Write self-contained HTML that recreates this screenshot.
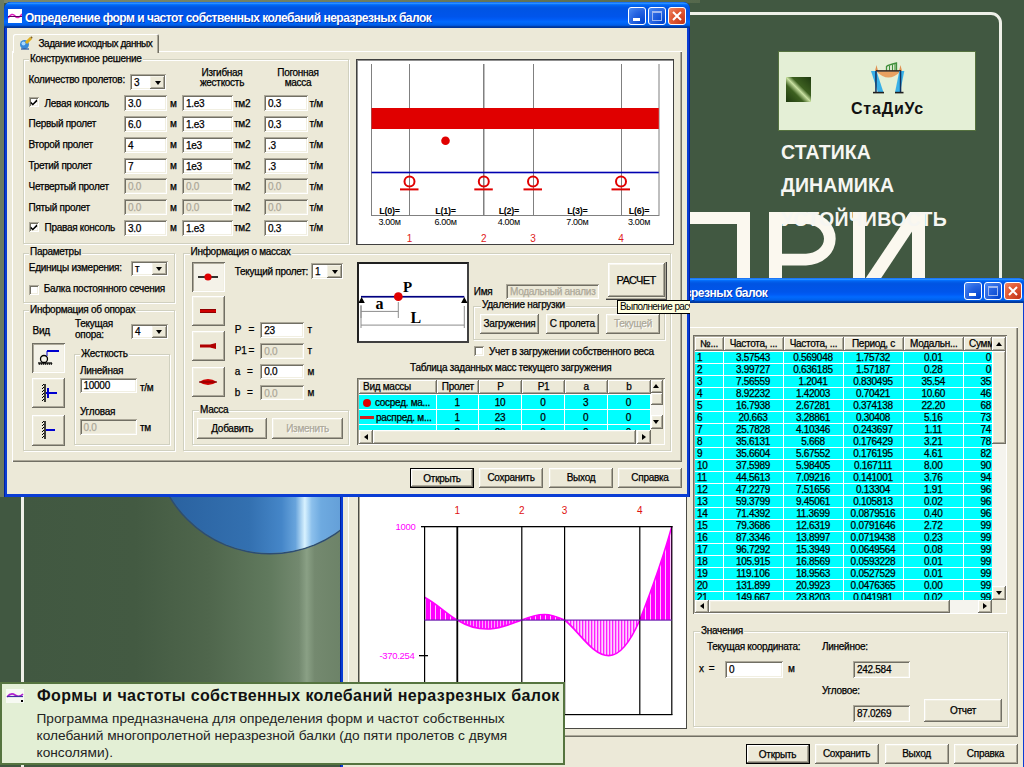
<!DOCTYPE html><html><head><meta charset="utf-8"><title>Recreation</title><style>
*{margin:0;padding:0;box-sizing:border-box}
html,body{width:1024px;height:767px;overflow:hidden}
body{position:relative;background:#415841;font-family:"Liberation Sans",sans-serif}
.a{position:absolute}
.t{position:absolute;font-size:10px;letter-spacing:-0.28px;line-height:12px;white-space:nowrap;color:#000}
.gl{background:#ece9d8;padding:0 1px}
.ed{position:absolute;background:#fff;box-shadow:inset 1px 1px #aca899,inset -1px -1px #fff,inset 2px 2px #716f64,inset -2px -2px #f1efe2;font-size:10px;letter-spacing:-0.28px;padding-left:4px;white-space:nowrap;overflow:hidden;color:#000}
.ed.dis{background:#ece9d8;color:#aca899}
.ed.ro{background:#ece9d8}
.btn{position:absolute;background:#ece9d8;box-shadow:inset -1px -1px #716f64,inset 1px 1px #fff,inset -2px -2px #aca899,inset 2px 2px #f1efe2;font-size:10px;letter-spacing:-0.28px;text-align:center;white-space:nowrap;overflow:hidden;color:#000}
.btn.def{border:1px solid #000;box-shadow:inset -1px -1px #716f64,inset 1px 1px #fff,inset -2px -2px #aca899,inset 2px 2px #f1efe2}
.btn.dis{color:#aca899;text-shadow:1px 1px #fff}
.btn.prs{background:#f4f2e8;box-shadow:inset 1px 1px #716f64,inset -1px -1px #fff,inset 2px 2px #aca899,inset -2px -2px #f1efe2}
.grp{position:absolute;border:1px solid #d0d0bf;box-shadow:inset 1px 1px #fff,1px 1px #fff}
.chk{position:absolute;background:#fff;box-shadow:inset 1px 1px #aca899,inset -1px -1px #fff,inset 2px 2px #716f64,inset -2px -2px #f1efe2}
.arr{position:absolute;left:50%;top:50%;width:0;height:0;border-left:3.5px solid transparent;border-right:3.5px solid transparent}
.arr.dn{border-top:4px solid #000;margin:-2px 0 0 -3.5px}
.arr.up{border-bottom:4px solid #000;margin:-2px 0 0 -3.5px}
.arr.lf{border:0;border-top:3.5px solid transparent;border-bottom:3.5px solid transparent;border-right:4px solid #000;margin:-3.5px 0 0 -2px}
.arr.rt{border:0;border-top:3.5px solid transparent;border-bottom:3.5px solid transparent;border-left:4px solid #000;margin:-3.5px 0 0 -2px}
.tb{background:linear-gradient(to bottom,#0058ee 0%,#3593ff 4%,#288eff 6%,#127dff 8%,#036ffc 10%,#0262ee 14%,#0057e5 20%,#0054e3 24%,#0055eb 56%,#005bf5 66%,#026afe 76%,#0062ef 86%,#0052d6 92%,#0040ab 94%,#003092 100%)}
.ttl{position:absolute;color:#fff;font-weight:bold;font-size:12px;letter-spacing:-0.5px;white-space:nowrap;line-height:14px;text-shadow:1px 1px rgba(10,24,131,0.6)}
.wb{position:absolute;width:18px;height:18px;border:1px solid #fff;border-radius:3px;background:radial-gradient(circle at 90% 90%,#0044d0 0%,#2663e0 55%,#4d8cf5 100%)}
.wb.cl{background:radial-gradient(circle at 90% 90%,#c4361a 0%,#e05a34 60%,#f08a6a 100%)}
.grid{position:absolute;overflow:hidden}
.hd{position:absolute;background:#ece9d8;box-shadow:inset -1px -1px #716f64,inset 1px 1px #fff,inset -2px -2px #aca899;font-size:10px;letter-spacing:-0.28px;text-align:center;white-space:nowrap;overflow:hidden;color:#000}
.t,.ed,.btn,.hd,.cy{-webkit-text-stroke:0.25px currentColor}
.cy{position:absolute;background:#00ffff;font-size:10px;letter-spacing:-0.28px;text-align:center;white-space:nowrap;overflow:hidden;color:#000}
</style></head><body>
<div class="a" style="left:24px;top:490px;width:316px;height:200px;background:linear-gradient(to right,#415841 0%,#435a42 35%,#4f664c 58%,#617a5e 78%,#73896f 87%,#8aa085 89.5%,#74896f 92%,#6d8368 100%)"></div>
<div class="a" style="left:0;top:490px;width:340px;height:200px;overflow:hidden"><div class="a" style="left:154px;top:-169px;width:232px;height:232px;border-radius:50%;background:linear-gradient(to right,#24578f 0%,#2a62a0 7%,#3370b0 41%,#4586c8 55%,#68a4dc 61%,#d8f2ff 65%,#8cc0ec 68%,#6eaae0 72%,#5f9ad4 85%,#5a94cc 100%);box-shadow:0 0 0 1.5px #2c4c74"></div></div>
<div class="a" style="left:0px;top:0px;width:700px;height:3px;background:linear-gradient(to right,#7b876c,#6f7d60 50%,#55684c)"></div>
<div class="a" style="left:0px;top:0px;width:4px;height:497px;background:#6b7b62"></div>
<div class="a" style="left:21px;top:12px;width:981px;height:888px;border:3px solid #eef0e8;border-radius:11px"></div>
<svg class="a" style="left:0;top:0" width="1024" height="767"><g fill="#fbf8ef">
<rect x="600" y="212" width="150" height="12"/><rect x="737" y="212" width="13" height="90"/>
<rect x="769" y="212" width="13" height="90"/>
<path fill-rule="evenodd" d="M769 212 H806 A29.7 26.7 0 0 1 806 265.4 H769 Z M782 224 H806 A18 14.85 0 0 1 806 253.7 H782 Z"/>
<rect x="853" y="212" width="12" height="90"/><rect x="912" y="212" width="13" height="90"/>
<path d="M851 300 L866.6 300 L925 212 L910 212 Z"/>
</g></svg>
<div class="a" style="left:781px;top:142.5px;font:bold 19.5px/1 'Liberation Sans',sans-serif;letter-spacing:0.1px;color:#f6f6f2;white-space:nowrap">СТАТИКА</div>
<div class="a" style="left:781px;top:175.5px;font:bold 19.5px/1 'Liberation Sans',sans-serif;letter-spacing:0.1px;color:#f6f6f2;white-space:nowrap">ДИНАМИКА</div>
<div class="a" style="left:781px;top:210px;font:bold 19.5px/1 'Liberation Sans',sans-serif;letter-spacing:0.3px;color:#f6f6f2;white-space:nowrap">УСТОЙЧИВОСТЬ</div>
<div class="a" style="left:778px;top:51px;width:198px;height:80px;background:#e4efd6;border:1px solid #55723f"></div>
<div class="a" style="left:786px;top:77px;width:25px;height:25px;background:linear-gradient(45deg,#1f3a10 0%,#3d6020 35%,#c8e0a0 50%,#3d6020 62%,#1f3a10 100%)"></div>
<svg class="a" style="left:866px;top:60px" width="44" height="36" viewBox="0 0 44 36">
<path d="M9 11 L10.5 5 L12 11 Z M33 11 L34.5 5 L36 11Z" fill="#e09050"/>
<path d="M20.5 11 L20.5 6.5 Q22 5 30.5 3 L30.5 11" fill="none" stroke="#40903c" stroke-width="1.3"/>
<path d="M23.5 11 V5.5 M26.5 11 V4.5 M29 11 V4" stroke="#40903c" stroke-width="1.1"/>
<path d="M10.5 11.5 Q22.4 23.5 34.5 11.5 Z" fill="#e8a060"/>
<rect x="10" y="10.1" width="25" height="1.6" fill="#3a2a20"/>
<path d="M5 11 L10.5 11 L17.5 32.4 L12 32.4 Z" fill="#38b0e8"/><rect x="9.2" y="11" width="1.5" height="21.4" fill="#103060"/>
<path d="M33.3 11 L38.3 11 L34 32.4 L29 32.4 Z" fill="#38b0e8"/><rect x="33.8" y="11" width="1.5" height="21.4" fill="#103060"/>
<rect x="7" y="31.8" width="11" height="1.6" fill="#202020"/><rect x="29" y="31.8" width="8.5" height="1.6" fill="#202020"/>
</svg>
<div class="a" style="left:851px;top:101px;font:bold 16px/1 'Liberation Sans',sans-serif;letter-spacing:0.8px;color:#111;white-space:nowrap">СтаДиУс</div>
<div class="a" style="left:340px;top:278px;width:686px;height:495px;background:#0a3dd4;border-radius:7px 7px 0 0;overflow:hidden;box-shadow:inset 1px 0 #0020a0,inset -1px 0 #0020a0">
<div class="a tb" style="left:0;top:0;width:686px;height:25px"></div>
<div class="a" style="left:3px;top:25px;width:680px;height:467px;background:#ece9d8"></div>
<div class="a" style="left:4px;top:7px;width:14px;height:14px;background:#fff"><svg class="a" width="14" height="14"><path d="M0 9 Q4 3 7 7 T14 5" stroke="#e020c0" stroke-width="1.5" fill="none"/><rect x="0" y="7" width="14" height="1" fill="#600060"/></svg></div>
<div class="ttl" style="left:21px;top:8px">Определение форм и частот собственных колебаний неразрезных балок</div>
<div class="wb" style="left:624px;top:4px"><div class="a" style="left:4px;top:10px;width:7px;height:3px;background:#fff"></div></div>
<div class="wb" style="left:644px;top:4px"><div class="a" style="left:3px;top:3px;width:10px;height:10px;border:1px solid #9fb8f0;border-top-width:2px"></div></div>
<div class="wb cl" style="left:664px;top:4px"><svg class="a" style="left:3px;top:3px" width="10" height="10"><path d="M1 1 L9 9 M9 1 L1 9" stroke="#fff" stroke-width="2"/></svg></div>
</div>
<div class="a" style="left:348px;top:327px;width:670px;height:410px;box-shadow:inset 1px 1px #fff,inset -1px -1px #716f64,inset -2px -2px #aca899"></div>
<div class="btn def" style="left:745.5px;top:743.5px;width:64.0px;height:20.0px;line-height:20.0px;">Открыть</div>
<div class="btn" style="left:814.5px;top:743.5px;width:64.0px;height:20.0px;line-height:20.0px;">Сохранить</div>
<div class="btn" style="left:884.5px;top:743.5px;width:64.0px;height:20.0px;line-height:20.0px;">Выход</div>
<div class="btn" style="left:953.5px;top:743.5px;width:64.0px;height:20.0px;line-height:20.0px;">Справка</div>
<div class="a" style="left:357.5px;top:335px;width:329.0px;height:394px;background:#fff;border:1px solid #4a4a44;box-shadow:inset 1px 1px #aca899"></div>
<svg class="a" style="left:0;top:0" width="1024" height="767">
<defs>
<pattern id="hA" width="3" height="4" patternUnits="userSpaceOnUse"><rect width="3" height="4" fill="#ffd0ff"/><rect width="1.3" height="4" fill="#ff20ff"/></pattern>
<pattern id="hM" width="3" height="4" patternUnits="userSpaceOnUse"><rect width="3" height="4" fill="#ffa0ff"/><rect width="2" height="4" fill="#ff10ff"/></pattern>
<pattern id="hB" width="5" height="4" patternUnits="userSpaceOnUse"><rect width="5" height="4" fill="#ff00ff"/><rect width="1" height="4" fill="#ffc0ff"/></pattern>
<clipPath id="c1"><rect x="420" y="500" width="37.2" height="200"/><rect x="521.8" y="500" width="42.7" height="200"/><rect x="639.8" y="500" width="40" height="200"/></clipPath>
<clipPath id="c2"><rect x="457.2" y="500" width="64.6" height="200"/></clipPath>
<clipPath id="c3"><rect x="564.5" y="500" width="75.3" height="200"/></clipPath>
<path id="crv" d="M424.5 597.3 C437 604 448 615 457.2 620 C470 628 480 629.5 489.8 629 C503 628 513 623 521.8 620 C530 616.5 537 614.5 544.5 614.5 C552 614.5 558 617 564.5 620 C578 630 592 655.6 608.8 655.6 C622 655.6 632 638 639.8 620 C650 594 662 562 671.8 526.4 L671.8 620 L424.5 620 Z"/>
</defs>
<use href="#crv" fill="url(#hB)" clip-path="url(#c1)"/>
<use href="#crv" fill="url(#hM)" clip-path="url(#c2)"/>
<use href="#crv" fill="url(#hA)" clip-path="url(#c3)"/>
<path d="M424.5 597.3 C437 604 448 615 457.2 620 C470 628 480 629.5 489.8 629 C503 628 513 623 521.8 620 C530 616.5 537 614.5 544.5 614.5 C552 614.5 558 617 564.5 620 C578 630 592 655.6 608.8 655.6 C622 655.6 632 638 639.8 620 C650 594 662 562 671.8 526.4" fill="none" stroke="#ff00ff" stroke-width="1.6"/>
<g fill="#000"><rect x="421" y="526" width="251.5" height="1.3"/>
<rect x="424" y="526" width="1.2" height="189"/><rect x="456.4" y="526" width="1.8" height="189"/><rect x="521.2" y="526" width="1.2" height="189"/>
<rect x="564" y="526" width="1.2" height="189"/><rect x="639.2" y="526" width="1.2" height="189"/><rect x="671.2" y="526" width="1.2" height="189"/>
<rect x="424" y="714" width="248.4" height="1.2"/><rect x="419" y="655" width="9" height="1.3"/></g>
<rect x="424.5" y="619.5" width="247.3" height="1.2" fill="#7020b0"/>
<g fill="#e01010" font-family="Liberation Sans" font-size="10" text-anchor="middle"><text x="457.2" y="513.5">1</text><text x="521.8" y="513.5">2</text><text x="564.5" y="513.5">3</text><text x="639.8" y="513.5">4</text></g>
<g fill="#ff00ff" font-family="Liberation Sans" font-size="9.5" text-anchor="end" letter-spacing="-0.3"><text x="415.5" y="529.5">1000</text><text x="414.5" y="659.3">-370.254</text></g>
</svg>
<div class="a" style="left:693px;top:335px;width:314px;height:279px;background:#ece9d8;box-shadow:inset 1px 1px #716f64,inset -1px -1px #fff,inset 2px 2px #aca899"></div>
<div class="grid" style="left:695px;top:337px;width:297px;height:263px">
<div class="a" style="left:0;top:14px;width:297px;height:260px;background:#fff"></div>
<div class="hd" style="left:0px;top:0;width:28.5px;height:14px;line-height:14px;text-align:left;padding-left:5px;">№...</div>
<div class="hd" style="left:28.5px;top:0;width:60.0px;height:14px;line-height:14px;">Частота, ...</div>
<div class="hd" style="left:88.5px;top:0;width:60.0px;height:14px;line-height:14px;">Частота, ...</div>
<div class="hd" style="left:148.5px;top:0;width:60.0px;height:14px;line-height:14px;">Период, с</div>
<div class="hd" style="left:208.5px;top:0;width:60.5px;height:14px;line-height:14px;">Модальн...</div>
<div class="hd" style="left:269px;top:0;width:28px;height:14px;line-height:14px;text-align:left;padding-left:5px;">Сумм</div>
<div class="cy" style="left:0px;top:15px;width:27.5px;height:11px;line-height:12px;text-align:left;padding-left:2px;">1</div>
<div class="cy" style="left:28.5px;top:15px;width:59.0px;height:11px;line-height:12px;">3.57543</div>
<div class="cy" style="left:88.5px;top:15px;width:59.0px;height:11px;line-height:12px;">0.569048</div>
<div class="cy" style="left:148.5px;top:15px;width:59.0px;height:11px;line-height:12px;">1.75732</div>
<div class="cy" style="left:208.5px;top:15px;width:59.5px;height:11px;line-height:12px;">0.01</div>
<div class="cy" style="left:269px;top:15px;width:28px;height:11px;line-height:12px;text-align:right;padding-right:1px;">0</div>
<div class="cy" style="left:0px;top:27px;width:27.5px;height:11px;line-height:12px;text-align:left;padding-left:2px;">2</div>
<div class="cy" style="left:28.5px;top:27px;width:59.0px;height:11px;line-height:12px;">3.99727</div>
<div class="cy" style="left:88.5px;top:27px;width:59.0px;height:11px;line-height:12px;">0.636185</div>
<div class="cy" style="left:148.5px;top:27px;width:59.0px;height:11px;line-height:12px;">1.57187</div>
<div class="cy" style="left:208.5px;top:27px;width:59.5px;height:11px;line-height:12px;">0.28</div>
<div class="cy" style="left:269px;top:27px;width:28px;height:11px;line-height:12px;text-align:right;padding-right:1px;">0</div>
<div class="cy" style="left:0px;top:39px;width:27.5px;height:11px;line-height:12px;text-align:left;padding-left:2px;">3</div>
<div class="cy" style="left:28.5px;top:39px;width:59.0px;height:11px;line-height:12px;">7.56559</div>
<div class="cy" style="left:88.5px;top:39px;width:59.0px;height:11px;line-height:12px;">1.2041</div>
<div class="cy" style="left:148.5px;top:39px;width:59.0px;height:11px;line-height:12px;">0.830495</div>
<div class="cy" style="left:208.5px;top:39px;width:59.5px;height:11px;line-height:12px;">35.54</div>
<div class="cy" style="left:269px;top:39px;width:28px;height:11px;line-height:12px;text-align:right;padding-right:1px;">35</div>
<div class="cy" style="left:0px;top:51px;width:27.5px;height:11px;line-height:12px;text-align:left;padding-left:2px;">4</div>
<div class="cy" style="left:28.5px;top:51px;width:59.0px;height:11px;line-height:12px;">8.92232</div>
<div class="cy" style="left:88.5px;top:51px;width:59.0px;height:11px;line-height:12px;">1.42003</div>
<div class="cy" style="left:148.5px;top:51px;width:59.0px;height:11px;line-height:12px;">0.70421</div>
<div class="cy" style="left:208.5px;top:51px;width:59.5px;height:11px;line-height:12px;">10.60</div>
<div class="cy" style="left:269px;top:51px;width:28px;height:11px;line-height:12px;text-align:right;padding-right:1px;">46</div>
<div class="cy" style="left:0px;top:63px;width:27.5px;height:11px;line-height:12px;text-align:left;padding-left:2px;">5</div>
<div class="cy" style="left:28.5px;top:63px;width:59.0px;height:11px;line-height:12px;">16.7938</div>
<div class="cy" style="left:88.5px;top:63px;width:59.0px;height:11px;line-height:12px;">2.67281</div>
<div class="cy" style="left:148.5px;top:63px;width:59.0px;height:11px;line-height:12px;">0.374138</div>
<div class="cy" style="left:208.5px;top:63px;width:59.5px;height:11px;line-height:12px;">22.20</div>
<div class="cy" style="left:269px;top:63px;width:28px;height:11px;line-height:12px;text-align:right;padding-right:1px;">68</div>
<div class="cy" style="left:0px;top:75px;width:27.5px;height:11px;line-height:12px;text-align:left;padding-left:2px;">6</div>
<div class="cy" style="left:28.5px;top:75px;width:59.0px;height:11px;line-height:12px;">20.663</div>
<div class="cy" style="left:88.5px;top:75px;width:59.0px;height:11px;line-height:12px;">3.28861</div>
<div class="cy" style="left:148.5px;top:75px;width:59.0px;height:11px;line-height:12px;">0.30408</div>
<div class="cy" style="left:208.5px;top:75px;width:59.5px;height:11px;line-height:12px;">5.16</div>
<div class="cy" style="left:269px;top:75px;width:28px;height:11px;line-height:12px;text-align:right;padding-right:1px;">73</div>
<div class="cy" style="left:0px;top:87px;width:27.5px;height:11px;line-height:12px;text-align:left;padding-left:2px;">7</div>
<div class="cy" style="left:28.5px;top:87px;width:59.0px;height:11px;line-height:12px;">25.7828</div>
<div class="cy" style="left:88.5px;top:87px;width:59.0px;height:11px;line-height:12px;">4.10346</div>
<div class="cy" style="left:148.5px;top:87px;width:59.0px;height:11px;line-height:12px;">0.243697</div>
<div class="cy" style="left:208.5px;top:87px;width:59.5px;height:11px;line-height:12px;">1.11</div>
<div class="cy" style="left:269px;top:87px;width:28px;height:11px;line-height:12px;text-align:right;padding-right:1px;">74</div>
<div class="cy" style="left:0px;top:99px;width:27.5px;height:11px;line-height:12px;text-align:left;padding-left:2px;">8</div>
<div class="cy" style="left:28.5px;top:99px;width:59.0px;height:11px;line-height:12px;">35.6131</div>
<div class="cy" style="left:88.5px;top:99px;width:59.0px;height:11px;line-height:12px;">5.668</div>
<div class="cy" style="left:148.5px;top:99px;width:59.0px;height:11px;line-height:12px;">0.176429</div>
<div class="cy" style="left:208.5px;top:99px;width:59.5px;height:11px;line-height:12px;">3.21</div>
<div class="cy" style="left:269px;top:99px;width:28px;height:11px;line-height:12px;text-align:right;padding-right:1px;">78</div>
<div class="cy" style="left:0px;top:111px;width:27.5px;height:11px;line-height:12px;text-align:left;padding-left:2px;">9</div>
<div class="cy" style="left:28.5px;top:111px;width:59.0px;height:11px;line-height:12px;">35.6604</div>
<div class="cy" style="left:88.5px;top:111px;width:59.0px;height:11px;line-height:12px;">5.67552</div>
<div class="cy" style="left:148.5px;top:111px;width:59.0px;height:11px;line-height:12px;">0.176195</div>
<div class="cy" style="left:208.5px;top:111px;width:59.5px;height:11px;line-height:12px;">4.61</div>
<div class="cy" style="left:269px;top:111px;width:28px;height:11px;line-height:12px;text-align:right;padding-right:1px;">82</div>
<div class="cy" style="left:0px;top:123px;width:27.5px;height:11px;line-height:12px;text-align:left;padding-left:2px;">10</div>
<div class="cy" style="left:28.5px;top:123px;width:59.0px;height:11px;line-height:12px;">37.5989</div>
<div class="cy" style="left:88.5px;top:123px;width:59.0px;height:11px;line-height:12px;">5.98405</div>
<div class="cy" style="left:148.5px;top:123px;width:59.0px;height:11px;line-height:12px;">0.167111</div>
<div class="cy" style="left:208.5px;top:123px;width:59.5px;height:11px;line-height:12px;">8.00</div>
<div class="cy" style="left:269px;top:123px;width:28px;height:11px;line-height:12px;text-align:right;padding-right:1px;">90</div>
<div class="cy" style="left:0px;top:135px;width:27.5px;height:11px;line-height:12px;text-align:left;padding-left:2px;">11</div>
<div class="cy" style="left:28.5px;top:135px;width:59.0px;height:11px;line-height:12px;">44.5613</div>
<div class="cy" style="left:88.5px;top:135px;width:59.0px;height:11px;line-height:12px;">7.09216</div>
<div class="cy" style="left:148.5px;top:135px;width:59.0px;height:11px;line-height:12px;">0.141001</div>
<div class="cy" style="left:208.5px;top:135px;width:59.5px;height:11px;line-height:12px;">3.76</div>
<div class="cy" style="left:269px;top:135px;width:28px;height:11px;line-height:12px;text-align:right;padding-right:1px;">94</div>
<div class="cy" style="left:0px;top:147px;width:27.5px;height:11px;line-height:12px;text-align:left;padding-left:2px;">12</div>
<div class="cy" style="left:28.5px;top:147px;width:59.0px;height:11px;line-height:12px;">47.2279</div>
<div class="cy" style="left:88.5px;top:147px;width:59.0px;height:11px;line-height:12px;">7.51656</div>
<div class="cy" style="left:148.5px;top:147px;width:59.0px;height:11px;line-height:12px;">0.13304</div>
<div class="cy" style="left:208.5px;top:147px;width:59.5px;height:11px;line-height:12px;">1.91</div>
<div class="cy" style="left:269px;top:147px;width:28px;height:11px;line-height:12px;text-align:right;padding-right:1px;">96</div>
<div class="cy" style="left:0px;top:159px;width:27.5px;height:11px;line-height:12px;text-align:left;padding-left:2px;">13</div>
<div class="cy" style="left:28.5px;top:159px;width:59.0px;height:11px;line-height:12px;">59.3799</div>
<div class="cy" style="left:88.5px;top:159px;width:59.0px;height:11px;line-height:12px;">9.45061</div>
<div class="cy" style="left:148.5px;top:159px;width:59.0px;height:11px;line-height:12px;">0.105813</div>
<div class="cy" style="left:208.5px;top:159px;width:59.5px;height:11px;line-height:12px;">0.02</div>
<div class="cy" style="left:269px;top:159px;width:28px;height:11px;line-height:12px;text-align:right;padding-right:1px;">96</div>
<div class="cy" style="left:0px;top:171px;width:27.5px;height:11px;line-height:12px;text-align:left;padding-left:2px;">14</div>
<div class="cy" style="left:28.5px;top:171px;width:59.0px;height:11px;line-height:12px;">71.4392</div>
<div class="cy" style="left:88.5px;top:171px;width:59.0px;height:11px;line-height:12px;">11.3699</div>
<div class="cy" style="left:148.5px;top:171px;width:59.0px;height:11px;line-height:12px;">0.0879516</div>
<div class="cy" style="left:208.5px;top:171px;width:59.5px;height:11px;line-height:12px;">0.40</div>
<div class="cy" style="left:269px;top:171px;width:28px;height:11px;line-height:12px;text-align:right;padding-right:1px;">96</div>
<div class="cy" style="left:0px;top:183px;width:27.5px;height:11px;line-height:12px;text-align:left;padding-left:2px;">15</div>
<div class="cy" style="left:28.5px;top:183px;width:59.0px;height:11px;line-height:12px;">79.3686</div>
<div class="cy" style="left:88.5px;top:183px;width:59.0px;height:11px;line-height:12px;">12.6319</div>
<div class="cy" style="left:148.5px;top:183px;width:59.0px;height:11px;line-height:12px;">0.0791646</div>
<div class="cy" style="left:208.5px;top:183px;width:59.5px;height:11px;line-height:12px;">2.72</div>
<div class="cy" style="left:269px;top:183px;width:28px;height:11px;line-height:12px;text-align:right;padding-right:1px;">99</div>
<div class="cy" style="left:0px;top:195px;width:27.5px;height:11px;line-height:12px;text-align:left;padding-left:2px;">16</div>
<div class="cy" style="left:28.5px;top:195px;width:59.0px;height:11px;line-height:12px;">87.3346</div>
<div class="cy" style="left:88.5px;top:195px;width:59.0px;height:11px;line-height:12px;">13.8997</div>
<div class="cy" style="left:148.5px;top:195px;width:59.0px;height:11px;line-height:12px;">0.0719438</div>
<div class="cy" style="left:208.5px;top:195px;width:59.5px;height:11px;line-height:12px;">0.23</div>
<div class="cy" style="left:269px;top:195px;width:28px;height:11px;line-height:12px;text-align:right;padding-right:1px;">99</div>
<div class="cy" style="left:0px;top:207px;width:27.5px;height:11px;line-height:12px;text-align:left;padding-left:2px;">17</div>
<div class="cy" style="left:28.5px;top:207px;width:59.0px;height:11px;line-height:12px;">96.7292</div>
<div class="cy" style="left:88.5px;top:207px;width:59.0px;height:11px;line-height:12px;">15.3949</div>
<div class="cy" style="left:148.5px;top:207px;width:59.0px;height:11px;line-height:12px;">0.0649564</div>
<div class="cy" style="left:208.5px;top:207px;width:59.5px;height:11px;line-height:12px;">0.08</div>
<div class="cy" style="left:269px;top:207px;width:28px;height:11px;line-height:12px;text-align:right;padding-right:1px;">99</div>
<div class="cy" style="left:0px;top:219px;width:27.5px;height:11px;line-height:12px;text-align:left;padding-left:2px;">18</div>
<div class="cy" style="left:28.5px;top:219px;width:59.0px;height:11px;line-height:12px;">105.915</div>
<div class="cy" style="left:88.5px;top:219px;width:59.0px;height:11px;line-height:12px;">16.8569</div>
<div class="cy" style="left:148.5px;top:219px;width:59.0px;height:11px;line-height:12px;">0.0593228</div>
<div class="cy" style="left:208.5px;top:219px;width:59.5px;height:11px;line-height:12px;">0.01</div>
<div class="cy" style="left:269px;top:219px;width:28px;height:11px;line-height:12px;text-align:right;padding-right:1px;">99</div>
<div class="cy" style="left:0px;top:231px;width:27.5px;height:11px;line-height:12px;text-align:left;padding-left:2px;">19</div>
<div class="cy" style="left:28.5px;top:231px;width:59.0px;height:11px;line-height:12px;">119.106</div>
<div class="cy" style="left:88.5px;top:231px;width:59.0px;height:11px;line-height:12px;">18.9563</div>
<div class="cy" style="left:148.5px;top:231px;width:59.0px;height:11px;line-height:12px;">0.0527529</div>
<div class="cy" style="left:208.5px;top:231px;width:59.5px;height:11px;line-height:12px;">0.01</div>
<div class="cy" style="left:269px;top:231px;width:28px;height:11px;line-height:12px;text-align:right;padding-right:1px;">99</div>
<div class="cy" style="left:0px;top:243px;width:27.5px;height:11px;line-height:12px;text-align:left;padding-left:2px;">20</div>
<div class="cy" style="left:28.5px;top:243px;width:59.0px;height:11px;line-height:12px;">131.899</div>
<div class="cy" style="left:88.5px;top:243px;width:59.0px;height:11px;line-height:12px;">20.9923</div>
<div class="cy" style="left:148.5px;top:243px;width:59.0px;height:11px;line-height:12px;">0.0476365</div>
<div class="cy" style="left:208.5px;top:243px;width:59.5px;height:11px;line-height:12px;">0.00</div>
<div class="cy" style="left:269px;top:243px;width:28px;height:11px;line-height:12px;text-align:right;padding-right:1px;">99</div>
<div class="cy" style="left:0px;top:255px;width:27.5px;height:11px;line-height:12px;text-align:left;padding-left:2px;">21</div>
<div class="cy" style="left:28.5px;top:255px;width:59.0px;height:11px;line-height:12px;">149.667</div>
<div class="cy" style="left:88.5px;top:255px;width:59.0px;height:11px;line-height:12px;">23.8203</div>
<div class="cy" style="left:148.5px;top:255px;width:59.0px;height:11px;line-height:12px;">0.041981</div>
<div class="cy" style="left:208.5px;top:255px;width:59.5px;height:11px;line-height:12px;">0.02</div>
<div class="cy" style="left:269px;top:255px;width:28px;height:11px;line-height:12px;text-align:right;padding-right:1px;">99</div>
</div>
<div class="a" style="left:992px;top:337px;width:14px;height:263px;background:#f5f4ee"></div>
<div class="btn" style="left:992px;top:337px;width:14px;height:14px;line-height:14px;"><div class="arr up"></div></div>
<div class="btn" style="left:992px;top:351px;width:14px;height:93px;line-height:93px;"></div>
<div class="btn" style="left:992px;top:586px;width:14px;height:14px;line-height:14px;"><div class="arr dn"></div></div>
<div class="a" style="left:695px;top:600px;width:297px;height:13px;background:#f5f4ee"></div>
<div class="btn" style="left:695px;top:600px;width:14px;height:13px;line-height:13px;"><div class="arr lf"></div></div>
<div class="btn" style="left:709px;top:600px;width:241px;height:13px;line-height:13px;"></div>
<div class="btn" style="left:978px;top:600px;width:14px;height:13px;line-height:13px;"><div class="arr rt"></div></div>
<div class="a" style="left:992px;top:600px;width:14px;height:13px;background:#ece9d8"></div>
<div class="grp" style="left:693px;top:631px;width:315px;height:96px"></div>
<div class="t gl" style="left:700px;top:624.50px">Значения</div>
<div class="t" style="left:707px;top:641.40px;">Текущая координата:</div>
<div class="t" style="left:699px;top:663.40px;">x&nbsp; =</div>
<div class="ed" style="left:725px;top:661px;width:58px;height:17px;line-height:18.5px">0</div>
<div class="t" style="left:788px;top:663.40px;">м</div>
<div class="t" style="left:822px;top:641.40px;">Линейное:</div>
<div class="ed ro" style="left:853px;top:661px;width:57px;height:17px;line-height:18.5px">242.584</div>
<div class="t" style="left:822px;top:685.40px;">Угловое:</div>
<div class="ed ro" style="left:853px;top:705px;width:57px;height:17px;line-height:18.5px">87.0269</div>
<div class="btn" style="left:924px;top:699px;width:78px;height:23px;line-height:23px;">Отчет</div>
<div class="a" style="left:4px;top:2px;width:686px;height:495px;background:#0a3dd4;border-radius:7px 7px 0 0;overflow:hidden;box-shadow:inset 1px 0 #0020a0,inset -1px 0 #0020a0">
<div class="a tb" style="left:0;top:0;width:686px;height:26px"></div>
<div class="a" style="left:3px;top:26px;width:680px;height:466px;background:#ece9d8"></div>
<div class="a" style="left:4px;top:7px;width:14px;height:14px;background:#fff"><svg class="a" width="14" height="14"><path d="M0 9 Q4 3 7 7 T14 5" stroke="#e020c0" stroke-width="1.5" fill="none"/><rect x="0" y="7" width="14" height="1" fill="#600060"/></svg></div>
<div class="ttl" style="left:21px;top:8.5px">Определение форм и частот собственных колебаний неразрезных балок</div>
<div class="wb" style="left:624px;top:5px"><div class="a" style="left:4px;top:10px;width:7px;height:3px;background:#fff"></div></div>
<div class="wb" style="left:644px;top:5px"><div class="a" style="left:3px;top:3px;width:10px;height:10px;border:1px solid #9fb8f0;border-top-width:2px"></div></div>
<div class="wb cl" style="left:664px;top:5px"><svg class="a" style="left:3px;top:3px" width="10" height="10"><path d="M1 1 L9 9 M9 1 L1 9" stroke="#fff" stroke-width="2"/></svg></div>
</div>
<div class="a" style="left:0;top:0;width:690px;height:497px;overflow:hidden">
<div class="a" style="left:12px;top:51px;width:670px;height:411px;box-shadow:inset 1px 1px #fff,inset -1px -1px #716f64,inset -2px -2px #aca899"></div>
<div class="a" style="left:13px;top:34px;width:146px;height:19px;background:#ece9d8;box-shadow:inset 1px 1px #fff,inset -1px 0 #716f64,inset -2px 0 #aca899;border-radius:2px 2px 0 0"></div>
<svg class="a" style="left:19px;top:36px" width="14" height="14" viewBox="0 0 14 14">
<circle cx="5.5" cy="8.5" r="4.5" fill="#3a8ad8"/><circle cx="4.5" cy="7.5" r="2" fill="#a8d8ff"/>
<path d="M2 13 H10" stroke="#2050a0" stroke-width="1.2"/>
<path d="M7 7 L12 2" stroke="#e0b020" stroke-width="3"/><path d="M12 2 L13 1" stroke="#806020" stroke-width="2"/>
</svg>
<div class="t" style="left:38.5px;top:38.40px;letter-spacing:-0.45px">Задание исходных данных</div>
<div class="grp" style="left:23px;top:59px;width:326px;height:185px"></div>
<div class="t gl" style="left:29px;top:52.50px">Конструктивное решение</div>
<div class="t" style="left:28.5px;top:74.40px;">Количество пролетов:</div>
<div class="ed" style="left:130px;top:74px;width:36px;height:16px;line-height:17.5px">3</div>
<div class="btn" style="left:150px;top:76px;width:15px;height:13px;box-shadow:inset -1px -1px #716f64,inset 1px 1px #f4f2e8,inset -2px -2px #aca899"><div class="arr dn" style="margin-left:-3px"></div></div>
<div class="t" style="left:162px;width:120px;text-align:center;top:66.90px;">Изгибная</div>
<div class="t" style="left:162px;width:120px;text-align:center;top:77.40px;">жесткость</div>
<div class="t" style="left:238px;width:120px;text-align:center;top:66.90px;">Погонная</div>
<div class="t" style="left:238px;width:120px;text-align:center;top:77.40px;">масса</div>
<div class="chk" style="left:28.5px;top:97.45px;width:10px;height:10px"><svg class="a" style="left:1px;top:1px" width="8" height="8" viewBox="0 0 8 8"><path d="M0.8 3.6 L2.8 5.4 L6.8 1.2 L7.3 3.2 L2.8 7.4 L0.6 5.4 Z" fill="#000"/></svg></div>
<div class="t" style="left:44.5px;top:97.65px;">Левая консоль</div>
<div class="ed" style="left:124px;top:95px;width:43px;height:16px;line-height:17.5px">3.0</div>
<div class="t" style="left:170px;top:97.65px;">м</div>
<div class="ed" style="left:182px;top:95px;width:51px;height:16px;line-height:17.5px">1.e3</div>
<div class="t" style="left:234px;top:97.65px;">тм2</div>
<div class="ed" style="left:264px;top:95px;width:44px;height:16px;line-height:17.5px">0.3</div>
<div class="t" style="left:309.5px;top:97.65px;">т/м</div>
<div class="t" style="left:28.5px;top:118.45px;">Первый пролет</div>
<div class="ed" style="left:124px;top:116px;width:43px;height:16px;line-height:17.5px">6.0</div>
<div class="t" style="left:170px;top:118.45px;">м</div>
<div class="ed" style="left:182px;top:116px;width:51px;height:16px;line-height:17.5px">1.e3</div>
<div class="t" style="left:234px;top:118.45px;">тм2</div>
<div class="ed" style="left:264px;top:116px;width:44px;height:16px;line-height:17.5px">0.3</div>
<div class="t" style="left:309.5px;top:118.45px;">т/м</div>
<div class="t" style="left:28.5px;top:139.25px;">Второй пролет</div>
<div class="ed" style="left:124px;top:137px;width:43px;height:16px;line-height:17.5px">4</div>
<div class="t" style="left:170px;top:139.25px;">м</div>
<div class="ed" style="left:182px;top:137px;width:51px;height:16px;line-height:17.5px">1e3</div>
<div class="t" style="left:234px;top:139.25px;">тм2</div>
<div class="ed" style="left:264px;top:137px;width:44px;height:16px;line-height:17.5px">.3</div>
<div class="t" style="left:309.5px;top:139.25px;">т/м</div>
<div class="t" style="left:28.5px;top:160.05px;">Третий пролет</div>
<div class="ed" style="left:124px;top:158px;width:43px;height:16px;line-height:17.5px">7</div>
<div class="t" style="left:170px;top:160.05px;">м</div>
<div class="ed" style="left:182px;top:158px;width:51px;height:16px;line-height:17.5px">1e3</div>
<div class="t" style="left:234px;top:160.05px;">тм2</div>
<div class="ed" style="left:264px;top:158px;width:44px;height:16px;line-height:17.5px">.3</div>
<div class="t" style="left:309.5px;top:160.05px;">т/м</div>
<div class="t" style="left:28.5px;top:180.85px;">Четвертый пролет</div>
<div class="ed dis" style="left:124px;top:178px;width:43px;height:16px;line-height:17.5px">0.0</div>
<div class="t" style="left:170px;top:180.85px;">м</div>
<div class="ed dis" style="left:182px;top:178px;width:51px;height:16px;line-height:17.5px">0.0</div>
<div class="t" style="left:234px;top:180.85px;">тм2</div>
<div class="ed dis" style="left:264px;top:178px;width:44px;height:16px;line-height:17.5px">0.0</div>
<div class="t" style="left:309.5px;top:180.85px;">т/м</div>
<div class="t" style="left:28.5px;top:201.65px;">Пятый пролет</div>
<div class="ed dis" style="left:124px;top:199px;width:43px;height:16px;line-height:17.5px">0.0</div>
<div class="t" style="left:170px;top:201.65px;">м</div>
<div class="ed dis" style="left:182px;top:199px;width:51px;height:16px;line-height:17.5px">0.0</div>
<div class="t" style="left:234px;top:201.65px;">тм2</div>
<div class="ed dis" style="left:264px;top:199px;width:44px;height:16px;line-height:17.5px">0.0</div>
<div class="t" style="left:309.5px;top:201.65px;">т/м</div>
<div class="chk" style="left:28.5px;top:222.25px;width:10px;height:10px"><svg class="a" style="left:1px;top:1px" width="8" height="8" viewBox="0 0 8 8"><path d="M0.8 3.6 L2.8 5.4 L6.8 1.2 L7.3 3.2 L2.8 7.4 L0.6 5.4 Z" fill="#000"/></svg></div>
<div class="t" style="left:44.5px;top:222.45px;">Правая консоль</div>
<div class="ed" style="left:124px;top:220px;width:43px;height:16px;line-height:17.5px">3.0</div>
<div class="t" style="left:170px;top:222.45px;">м</div>
<div class="ed" style="left:182px;top:220px;width:51px;height:16px;line-height:17.5px">1.e3</div>
<div class="t" style="left:234px;top:222.45px;">тм2</div>
<div class="ed" style="left:264px;top:220px;width:44px;height:16px;line-height:17.5px">0.3</div>
<div class="t" style="left:309.5px;top:222.45px;">т/м</div>
<div class="a" style="left:356px;top:59px;width:317.5px;height:186px;background:#fff;border:1px solid #404040;box-shadow:inset 1px 1px #909090"></div>
<svg class="a" style="left:0;top:0" width="690" height="260">
<g fill="#808080"><rect x="371" y="64" width="1" height="152"/><rect x="409" y="64" width="1" height="152"/><rect x="483" y="64" width="1.5" height="152"/>
<rect x="533" y="64" width="1" height="152"/><rect x="621" y="64" width="1" height="152"/><rect x="658.5" y="64" width="1" height="152"/>
<rect x="371" y="215" width="288" height="1"/></g>
<rect x="371.5" y="108" width="287.3" height="21" fill="#e00000"/>
<circle cx="445.5" cy="140.7" r="4.3" fill="#e00000"/>
<rect x="371.5" y="171.7" width="287.3" height="1.6" fill="#0000b0"/>
<g fill="none" stroke="#e00000" stroke-width="2">
<circle cx="409.5" cy="181.5" r="5"/><path d="M400 189.4 H418.5"/>
<circle cx="483.8" cy="181.5" r="5"/><path d="M474.3 189.4 H492.8"/>
<circle cx="533" cy="181.5" r="5"/><path d="M523.5 189.4 H542"/>
<circle cx="621" cy="181.5" r="5"/><path d="M611.5 189.4 H630"/>
</g>
<g font-family="Liberation Sans" font-size="9" text-anchor="middle" fill="#000" letter-spacing="-0.3">
<text x="389.5" y="213.5" font-weight="bold">L(0)=</text><text x="389.5" y="225">3.00м</text>
<text x="445.5" y="213.5" font-weight="bold">L(1)=</text><text x="445.5" y="225">6.00м</text>
<text x="508.8" y="213.5" font-weight="bold">L(2)=</text><text x="508.8" y="225">4.00м</text>
<text x="577.3" y="213.5" font-weight="bold">L(3)=</text><text x="577.3" y="225">7.00м</text>
<text x="639" y="213.5" font-weight="bold">L(6)=</text><text x="639" y="225">3.00м</text>
</g>
<g font-family="Liberation Sans" font-size="10" text-anchor="middle" fill="#e02020">
<text x="409.5" y="242">1</text><text x="483.8" y="242">2</text><text x="533" y="242">3</text><text x="621" y="242">4</text>
</g>
</svg>
<div class="grp" style="left:22.5px;top:252.5px;width:152.5px;height:50.0px"></div>
<div class="t gl" style="left:29px;top:246.00px">Параметры</div>
<div class="t" style="left:28.75px;top:262.40px;">Единицы измерения:</div>
<div class="ed" style="left:131px;top:261px;width:36.5px;height:15px;line-height:16.5px">т</div>
<div class="btn" style="left:151.5px;top:263px;width:15px;height:12px;box-shadow:inset -1px -1px #716f64,inset 1px 1px #f4f2e8,inset -2px -2px #aca899"><div class="arr dn" style="margin-left:-3px"></div></div>
<div class="chk" style="left:29px;top:284.5px;width:10px;height:10px"></div>
<div class="t" style="left:43.75px;top:283.40px;">Балка постоянного сечения</div>
<div class="grp" style="left:22.5px;top:310px;width:152.5px;height:141px"></div>
<div class="t gl" style="left:29px;top:303.50px">Информация об опорах</div>
<div class="t" style="left:32.5px;top:325.15px;">Вид</div>
<div class="t" style="left:75px;top:318.15px;">Текущая</div>
<div class="t" style="left:75px;top:328.90px;">опора:</div>
<div class="ed" style="left:131px;top:323.75px;width:36.5px;height:15.25px;line-height:16.75px">4</div>
<div class="btn" style="left:151.5px;top:325.75px;width:15px;height:12.25px;box-shadow:inset -1px -1px #716f64,inset 1px 1px #f4f2e8,inset -2px -2px #aca899"><div class="arr dn" style="margin-left:-3px"></div></div>
<div class="btn prs" style="left:32px;top:342.5px;width:32.5px;height:30.0px;line-height:30.0px;"><svg class="a" style="left:3px;top:5px" width="26" height="20" viewBox="0 0 26 20"><path d="M12 3 H24" stroke="#0000d0" stroke-width="2"/><path d="M12 3 V8" stroke="#0000d0" stroke-width="1"/><circle cx="9" cy="11" r="3.5" fill="none" stroke="#000" stroke-width="1.3"/><path d="M3 15 H17" stroke="#000" stroke-width="1.3"/><path d="M4 17 l1 -2 M6 17 l1 -2 M8 17 l1 -2 M10 17 l1 -2 M12 17 l1 -2 M14 17 l1 -2 M16 17 l1 -2" stroke="#000" stroke-width="1"/></svg></div>
<div class="btn" style="left:32px;top:378px;width:32.5px;height:30px;line-height:30px;"><svg class="a" style="left:5px;top:4px" width="22" height="22" viewBox="0 0 22 22"><path d="M8 2 V20" stroke="#000" stroke-width="1.5"/><path d="M5 4 l2 -2 M5 7 l2 -2 M5 10 l2 -2 M5 13 l2 -2 M5 16 l2 -2 M5 19 l2 -2" stroke="#000" stroke-width="1"/><path d="M9 11 H20 M11 6 V16" stroke="#0000d0" stroke-width="2"/></svg></div>
<div class="btn" style="left:32px;top:415px;width:32.5px;height:30.5px;line-height:30.5px;"><svg class="a" style="left:5px;top:4px" width="22" height="22" viewBox="0 0 22 22"><path d="M8 2 V20" stroke="#000" stroke-width="1.5"/><path d="M5 4 l2 -2 M5 7 l2 -2 M5 10 l2 -2 M5 13 l2 -2 M5 16 l2 -2 M5 19 l2 -2" stroke="#000" stroke-width="1"/><path d="M9 11 H18" stroke="#0000d0" stroke-width="2"/></svg></div>
<div class="grp" style="left:74px;top:354px;width:95.5px;height:91px"></div>
<div class="t gl" style="left:80px;top:347.50px">Жесткость</div>
<div class="t" style="left:80px;top:364.90px;">Линейная</div>
<div class="ed" style="left:79.5px;top:378px;width:57.5px;height:15px;line-height:16.5px">10000</div>
<div class="t" style="left:140px;top:382.40px;">т/м</div>
<div class="t" style="left:80px;top:405.65px;">Угловая</div>
<div class="ed dis" style="left:79.5px;top:419px;width:57.5px;height:15.5px;line-height:17.0px">0.0</div>
<div class="t" style="left:140px;top:422.40px;">тм</div>
<div class="grp" style="left:183px;top:252.5px;width:488px;height:198.5px"></div>
<div class="t gl" style="left:189.5px;top:246.00px">Информация о массах</div>
<div class="btn prs" style="left:192px;top:262px;width:32.5px;height:30px;line-height:30px;"><svg class="a" style="left:4px;top:6px" width="24" height="18"><path d="M2 9 H22" stroke="#000" stroke-width="1.6"/><circle cx="12" cy="9" r="3.6" fill="#e00000"/></svg></div>
<div class="btn" style="left:192px;top:296px;width:32.5px;height:30px;line-height:30px;"><svg class="a" style="left:4px;top:6px" width="24" height="18"><rect x="4" y="7" width="16" height="4" fill="#900000"/><rect x="4" y="8" width="16" height="2" fill="#d00000"/></svg></div>
<div class="btn" style="left:192px;top:331px;width:32.5px;height:30px;line-height:30px;"><svg class="a" style="left:4px;top:6px" width="24" height="18"><path d="M4 7.5 L14 7.5 L20 6 L20 12 L14 10.5 L4 10.5 Z" fill="#b00000"/></svg></div>
<div class="btn" style="left:192px;top:367px;width:32.5px;height:30px;line-height:30px;"><svg class="a" style="left:4px;top:6px" width="24" height="18"><path d="M3 9 Q12 3 21 9 Q12 15 3 9 Z" fill="#d00000"/><path d="M3 9 H21" stroke="#700000" stroke-width="1"/></svg></div>
<div class="t" style="left:234.75px;top:265.65px;">Текущий пролет:</div>
<div class="ed" style="left:311px;top:263px;width:32px;height:16px;line-height:17.5px">1</div>
<div class="btn" style="left:327px;top:265px;width:15px;height:13px;box-shadow:inset -1px -1px #716f64,inset 1px 1px #f4f2e8,inset -2px -2px #aca899"><div class="arr dn" style="margin-left:-3px"></div></div>
<div class="t" style="left:234.75px;top:324.40px;">P</div>
<div class="t" style="left:248.5px;top:324.40px;">=</div>
<div class="ed" style="left:260.25px;top:322px;width:43.75px;height:16px;line-height:17.5px">23</div>
<div class="t" style="left:307.5px;top:324.40px;">т</div>
<div class="t" style="left:234.75px;top:345.15px;">P1</div>
<div class="t" style="left:248.5px;top:345.15px;">=</div>
<div class="ed dis" style="left:260.25px;top:342.5px;width:43.75px;height:16.5px;line-height:18.0px">0.0</div>
<div class="t" style="left:307.5px;top:345.15px;">т</div>
<div class="t" style="left:234.75px;top:366.40px;">a</div>
<div class="t" style="left:247px;top:366.40px;">=</div>
<div class="ed" style="left:260.25px;top:364px;width:43.75px;height:15px;line-height:16.5px">0.0</div>
<div class="t" style="left:307.5px;top:366.40px;">м</div>
<div class="t" style="left:234.75px;top:386.90px;">b</div>
<div class="t" style="left:247px;top:386.90px;">=</div>
<div class="ed dis" style="left:260.25px;top:384.5px;width:43.75px;height:15.5px;line-height:17.0px">0.0</div>
<div class="t" style="left:307.5px;top:386.90px;">м</div>
<div class="grp" style="left:192px;top:410px;width:156.5px;height:34.5px"></div>
<div class="t gl" style="left:199px;top:403.50px">Масса</div>
<div class="btn" style="left:197.25px;top:417.5px;width:70.0px;height:21.0px;line-height:21.0px;">Добавить</div>
<div class="btn dis" style="left:272.25px;top:417.5px;width:70.75px;height:21.0px;line-height:21.0px;">Изменить</div>
<div class="a" style="left:357px;top:262px;width:112px;height:81px;background:#fff;border:2px solid #202020;border-right-color:#404040;border-bottom-color:#404040"></div>
<svg class="a" style="left:357px;top:262px" width="112" height="81">
<rect x="4" y="33.9" width="103.3" height="1.7" fill="#000080"/>
<path d="M4.6 35 L1.4 41 L7.8 41 Z M107.3 35 L104.1 41 L110.5 41 Z" fill="#000"/>
<circle cx="41.3" cy="34.7" r="4.4" fill="#e00000"/>
<g stroke="#8c8c8c" stroke-width="1" fill="none"><path d="M4 49.4 H41.3 M4 43 V56 M41.3 40 V56 M4 63.1 H107.3 M4 44 V66 M107.3 44 V66"/></g>
<g font-family="Liberation Serif" font-weight="bold" fill="#000"><text x="46" y="30" font-size="15">P</text><text x="18.5" y="47" font-size="16">a</text><text x="53.5" y="61" font-size="16">L</text></g>
</svg>
<div class="t" style="left:473.75px;top:285.65px;">Имя</div>
<div class="ed dis" style="left:506px;top:284px;width:93px;height:15px;line-height:16.5px">Модальный анализ</div>
<div class="a" style="left:606px;top:262px;width:61px;height:37.5px;box-shadow:inset -1px -1px #404040,inset -2px -2px #aca899"></div>
<div class="btn" style="left:607.5px;top:263px;width:57.0px;height:33.5px;line-height:33.5px;font-size:11px;letter-spacing:-0.6px;line-height:35px;box-shadow:inset -1px -1px #716f64,inset 1px 1px #fff,inset -2px -2px #aca899,inset 2px 2px #f8f6ee">РАСЧЕТ</div>
<div class="grp" style="left:473px;top:305.5px;width:191.5px;height:34.5px"></div>
<div class="t gl" style="left:481px;top:299.00px">Удаление нагрузки</div>
<div class="btn" style="left:480px;top:314px;width:59px;height:20px;line-height:20px;">Загружения</div>
<div class="btn" style="left:545.5px;top:314px;width:53.5px;height:20px;line-height:20px;">С пролета</div>
<div class="btn dis" style="left:606px;top:314px;width:54px;height:20px;line-height:20px;">Текущей</div>
<div class="chk" style="left:474px;top:346px;width:10px;height:10px"></div>
<div class="t" style="left:489px;top:345.65px;">Учет в загружении собственного веса</div>
<div class="t" style="left:410px;top:362.40px;">Таблица заданных масс текущего загружения</div>
<div class="a" style="left:357px;top:377.5px;width:308px;height:67.5px;background:#ece9d8;box-shadow:inset 1px 1px #716f64,inset -1px -1px #fff,inset 2px 2px #aca899"></div>
<div class="grid" style="left:359px;top:379.5px;width:291.5px;height:50.5px">
<div class="a" style="left:0;top:14px;width:292px;height:40px;background:#fff"></div>
<div class="hd" style="left:0px;top:0;width:77.5px;height:14px;line-height:14px;text-align:left;padding-left:4px;">Вид массы</div>
<div class="hd" style="left:77.5px;top:0;width:42.5px;height:14px;line-height:14px;">Пролет</div>
<div class="hd" style="left:120px;top:0;width:43px;height:14px;line-height:14px;">P</div>
<div class="hd" style="left:163px;top:0;width:43px;height:14px;line-height:14px;">P1</div>
<div class="hd" style="left:206px;top:0;width:42.5px;height:14px;line-height:14px;">a</div>
<div class="hd" style="left:248.5px;top:0;width:43.0px;height:14px;line-height:14px;">b</div>
<div class="cy" style="left:0px;top:15.5px;width:76.5px;height:14px;line-height:16px;text-align:left;"><span style='display:inline-block;width:8px;height:8px;border-radius:50%;background:#e00000;margin:0 4px 0 4px;vertical-align:-1px'></span>сосред. ма...</div>
<div class="cy" style="left:77.5px;top:15.5px;width:41.5px;height:14px;line-height:16px;">1</div>
<div class="cy" style="left:120px;top:15.5px;width:42px;height:14px;line-height:16px;">10</div>
<div class="cy" style="left:163px;top:15.5px;width:42px;height:14px;line-height:16px;">0</div>
<div class="cy" style="left:206px;top:15.5px;width:41.5px;height:14px;line-height:16px;">3</div>
<div class="cy" style="left:248.5px;top:15.5px;width:42.0px;height:14px;line-height:16px;">0</div>
<div class="cy" style="left:0px;top:30.5px;width:76.5px;height:14px;line-height:16px;text-align:left;"><span style='display:inline-block;width:14px;height:3px;background:#d02020;margin:0 2px 0 1px;vertical-align:2px'></span>распред. м...</div>
<div class="cy" style="left:77.5px;top:30.5px;width:41.5px;height:14px;line-height:16px;">1</div>
<div class="cy" style="left:120px;top:30.5px;width:42px;height:14px;line-height:16px;">23</div>
<div class="cy" style="left:163px;top:30.5px;width:42px;height:14px;line-height:16px;">0</div>
<div class="cy" style="left:206px;top:30.5px;width:41.5px;height:14px;line-height:16px;">0</div>
<div class="cy" style="left:248.5px;top:30.5px;width:42.0px;height:14px;line-height:16px;">0</div>
<div class="cy" style="left:0px;top:45.5px;width:76.5px;height:14px;line-height:16px;text-align:left;"></div>
<div class="cy" style="left:77.5px;top:45.5px;width:41.5px;height:14px;line-height:16px;">2</div>
<div class="cy" style="left:120px;top:45.5px;width:42px;height:14px;line-height:16px;">23</div>
<div class="cy" style="left:163px;top:45.5px;width:42px;height:14px;line-height:16px;">0</div>
<div class="cy" style="left:206px;top:45.5px;width:41.5px;height:14px;line-height:16px;">0</div>
<div class="cy" style="left:248.5px;top:45.5px;width:42.0px;height:14px;line-height:16px;">0</div>
</div>
<div class="a" style="left:650.5px;top:379.5px;width:12.5px;height:49.5px;background:#f5f4ee"></div>
<div class="btn" style="left:650.5px;top:379.5px;width:12.5px;height:13.5px;line-height:13.5px;"><div class="arr up"></div></div>
<div class="btn" style="left:650.5px;top:393px;width:12.5px;height:12px;line-height:12px;"></div>
<div class="btn" style="left:650.5px;top:415px;width:12.5px;height:14px;line-height:14px;"><div class="arr dn"></div></div>
<div class="a" style="left:359px;top:430px;width:291.5px;height:14px;background:#f5f4ee"></div>
<div class="btn" style="left:359px;top:430px;width:14px;height:14px;line-height:14px;"><div class="arr lf"></div></div>
<div class="btn" style="left:373px;top:430px;width:263px;height:14px;line-height:14px;"></div>
<div class="btn" style="left:636.5px;top:430px;width:14.0px;height:14px;line-height:14px;"><div class="arr rt"></div></div>
<div class="btn def" style="left:410px;top:468px;width:64px;height:20px;line-height:20px;">Открыть</div>
<div class="btn" style="left:479px;top:468px;width:64px;height:20px;line-height:20px;">Сохранить</div>
<div class="btn" style="left:549px;top:468px;width:64px;height:20px;line-height:20px;">Выход</div>
<div class="btn" style="left:618px;top:468px;width:64px;height:20px;line-height:20px;">Справка</div>
<div class="a" style="left:617px;top:300px;width:120px;height:14px;background:#ffffe1;border:1px solid #000;font-size:10px;letter-spacing:-0.6px;line-height:12px;padding-left:2px;white-space:nowrap">Выполнение расчета</div>
</div>
<div class="a" style="left:0;top:682px;width:565px;height:83px;background:#e3efd5;border:2px solid #55743f"></div>
<svg class="a" style="left:5px;top:688px" width="20" height="16"><rect x="1" y="1" width="18" height="14" fill="#fff" opacity="0.7"/><path d="M2 9 Q6 4 10 7 T18 6" stroke="#b020d0" stroke-width="1.6" fill="none"/><path d="M2 8.5 H18" stroke="#4030a0" stroke-width="1.2"/><rect x="16" y="12" width="2" height="2" fill="#000"/></svg>
<div class="a" style="left:37px;top:688px;font:bold 16px/1 'Liberation Sans',sans-serif;letter-spacing:0.4px;color:#111;white-space:nowrap">Формы и частоты собственных колебаний неразрезных балок</div>
<div class="a" style="left:36.5px;top:710.3px;font:13.7px/17px 'Liberation Sans',sans-serif;color:#222;white-space:nowrap">Программа предназначена для определения форм и частот собственных<br>колебаний многопролетной неразрезной балки (до пяти пролетов с двумя<br>консолями).</div>
</body></html>
